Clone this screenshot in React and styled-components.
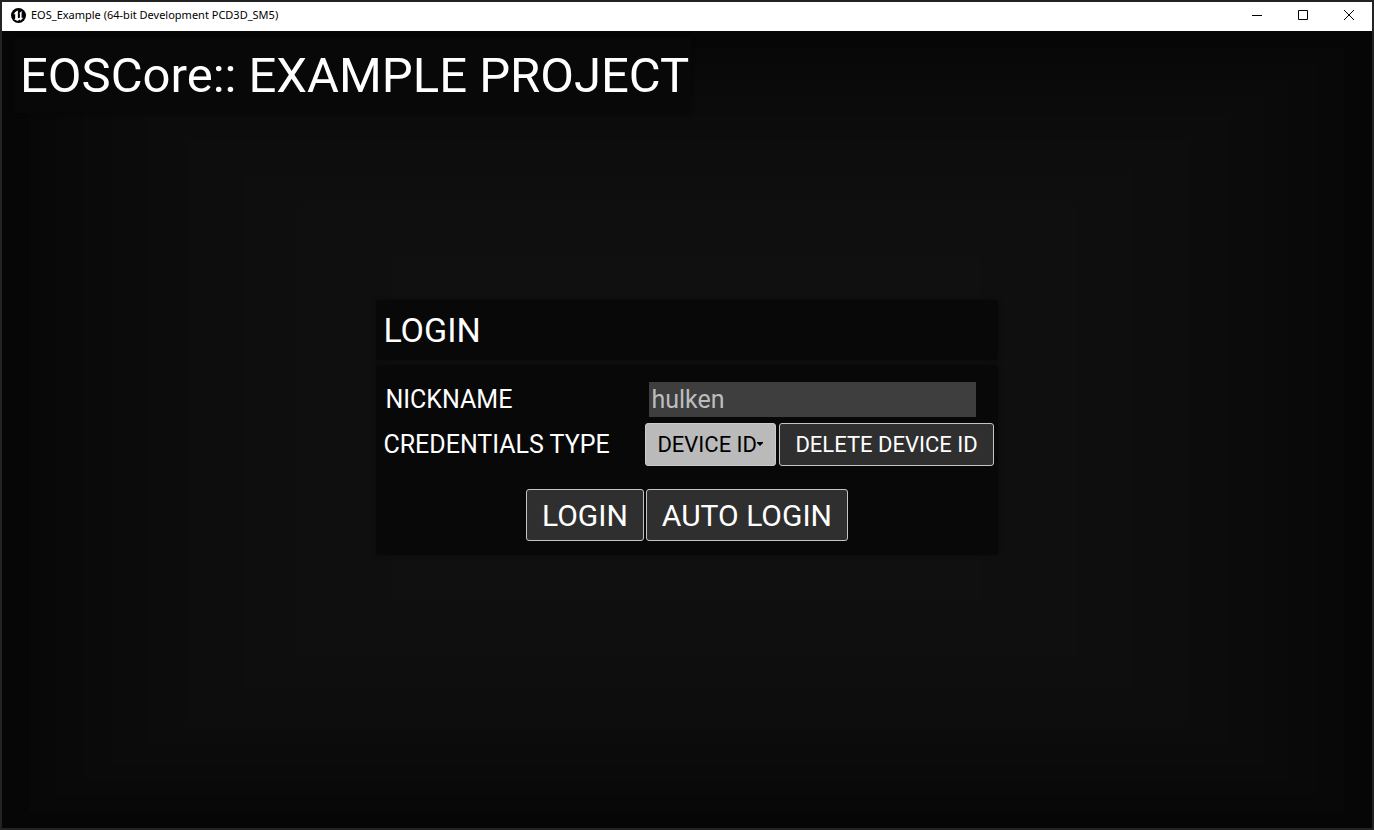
import React, { useState } from 'react';
import styled, { createGlobalStyle } from 'styled-components';

const GlobalStyle = createGlobalStyle`
  * {
    box-sizing: border-box;
  }

  body {
    margin: 0;
    background: #232323;
    font-family: Roboto, sans-serif;
  }
`;

const Window = styled.div`
  min-height: 100vh;
  padding: 2px;
  display: flex;
  flex-direction: column;
  background: #232323;
`;

const TitleBar = styled.header`
  height: 29px;
  padding: 0 0 3px 9px;
  display: flex;
  align-items: center;
  background: #fff;
  color: #000;
`;

const WindowTitle = styled.span`
  flex: 1;
  padding-left: 5px;
  font: 11px/16px 'Noto Sans', sans-serif;
`;

const WindowButton = styled.button`
  width: 46px;
  height: 26px;
  padding: 0;
  display: flex;
  align-items: center;
  justify-content: center;
  border: none;
  background: none;
  color: #000;
`;

// nested rectangles, one shade lighter with each step towards the centre
const shades = [
  { size: 43, level: 16 },
  { size: 57, level: 15 },
  { size: 65, level: 14 },
  { size: 73, level: 13 },
  { size: 79, level: 12 },
  { size: 84, level: 11 },
  { size: 88, level: 10 },
  { size: 92, level: 9 },
  { size: 96, level: 8 },
];

const fill = ({ level }) => `linear-gradient(rgb(${level}, ${level}, ${level}) 0 0)`;

const Stage = styled.main`
  flex: 1;
  padding: 7px 13px 11px;
  display: grid;
  grid-template-rows: 75px 1fr 75px;
  background-color: #060606;
  background-image: ${shades.map(fill).join(', ')};
  background-size: ${shades.map(({ size }) => `${size}% ${size}%`).join(', ')};
  background-position: center;
  background-repeat: no-repeat;
  color: #fff;
`;

const Banner = styled.h1`
  justify-self: start;
  margin: 0;
  padding: 0 2px 0 5px;
  background: #080808;
  box-shadow: 0 0 4px #060606;
  font-size: 49px;
  font-weight: 400;
  line-height: 75px;
`;

const LoginForm = styled.form`
  place-self: center;
  display: grid;
  gap: 5px;
`;

const Panel = styled.div`
  padding: ${(props) => props.$padding};
  border-radius: 4px;
  background: #080808;
  box-shadow: 0 0 4px #0a0a0a;
`;

const Heading = styled.h2`
  margin: 0;
  font-size: 34px;
  font-weight: 400;
  line-height: 60px;
`;

const Fields = styled.div`
  display: grid;
  grid-template-columns: 262px auto;
  row-gap: 6px;
  align-items: center;
`;

const Label = styled.label`
  padding-left: ${(props) => (props.$inset ? '2px' : '0')};
  font-size: 25px;
  line-height: 35px;
`;

const TextBox = styled.input`
  width: calc(100% - 22px);
  height: 35px;
  margin: 0 18px 0 4px;
  padding: 0 2px;
  border: none;
  outline: none;
  background: #3e3e3e;
  color: #bdbdbd;
  font: 25px/35px Roboto, sans-serif;
`;

const Controls = styled.div`
  display: flex;
  gap: 3px;
`;

const SelectBox = styled.div`
  display: flex;
  position: relative;
`;

const Select = styled.select`
  appearance: none;
  width: 131px;
  height: 43px;
  padding: 0 11px;
  border: 1px solid #cbcbcb;
  border-radius: 3px;
  outline: none;
  background: #bababa;
  color: #000;
  font: 22px/41px Roboto, sans-serif;
`;

const Caret = styled.svg`
  position: absolute;
  right: 13px;
  top: 19px;
  pointer-events: none;
`;

const Button = styled.button`
  height: ${(props) => (props.$large ? '52px' : '43px')};
  padding: 0 15px;
  border: 1px solid #c4c4c4;
  border-radius: 3px;
  background: #2f2f2f;
  color: #fff;
  font-family: inherit;
  font-size: ${(props) => (props.$large ? '30px' : '22px')};
`;

const Actions = styled.div`
  display: flex;
  justify-content: center;
  gap: 2px;
  padding: 23px 3px 14px 0;
`;

const UnrealLogo = () => (
  <svg width="15" height="15" viewBox="0 0 15 15" aria-hidden="true">
    <circle cx="7.5" cy="7.5" r="7.5" fill="#000" />
    <path
      d="M7.2 2.6C5 3.2 3.2 4.7 2.7 6.9c.6-.8 1.5-1.3 1.5-.4v3.7c0 .5-.4.8-.9.7.9 1.2 2.3 1.8 3.9 1.8l1.1-1.1 1.1.9c1.4-.8 2.3-1.8 2.8-3.2-.8.7-1.6 1-1.6.2V4.9c0-.6.4-1.1 1-1.6-.9.2-2.5.8-3.3 1.9.5 0 .6.2.6.7v3.7c-.4.5-.9.7-1.3.7-.4 0-.7-.2-.7-.7V4.4c0-.7 0-1.2.3-1.8z"
      fill="#fff"
    />
  </svg>
);

const App = () => {
  const [nickname, setNickname] = useState('hulken');

  return (
    <Window>
      <GlobalStyle />
      <TitleBar>
        <UnrealLogo />
        <WindowTitle>EOS_Example (64-bit Development PCD3D_SM5)</WindowTitle>
        <WindowButton type="button" aria-label="Minimize">
          <svg width="10" height="10"><path d="M0 5.5h10" stroke="currentColor" /></svg>
        </WindowButton>
        <WindowButton type="button" aria-label="Maximize">
          <svg width="10" height="10"><path d="M.5.5h9v9h-9z" fill="none" stroke="currentColor" /></svg>
        </WindowButton>
        <WindowButton type="button" aria-label="Close">
          <svg width="10" height="10"><path d="M0 0l10 10M10 0L0 10" stroke="currentColor" /></svg>
        </WindowButton>
      </TitleBar>
      <Stage>
        <Banner>EOSCore:: EXAMPLE PROJECT</Banner>
        <LoginForm onSubmit={(e) => e.preventDefault()}>
          <Panel $padding="0 7px">
            <Heading>LOGIN</Heading>
          </Panel>
          <Panel $padding="17px 4px 0 7px">
            <Fields>
              <Label htmlFor="nickname" $inset>NICKNAME</Label>
              <TextBox
                id="nickname"
                type="text"
                value={nickname}
                onChange={(e) => setNickname(e.target.value)}
              />
              <Label htmlFor="credentials">CREDENTIALS TYPE</Label>
              <Controls>
                <SelectBox>
                  <Select id="credentials">
                    <option>DEVICE ID</option>
                  </Select>
                  <Caret width="6" height="4" viewBox="0 0 6 4" aria-hidden="true">
                    <path d="M0 0h6v1L3 4 0 1z" fill="#000" />
                  </Caret>
                </SelectBox>
                <Button type="button">DELETE DEVICE ID</Button>
              </Controls>
            </Fields>
            <Actions>
              <Button type="submit" $large>LOGIN</Button>
              <Button type="button" $large>AUTO LOGIN</Button>
            </Actions>
          </Panel>
        </LoginForm>
      </Stage>
    </Window>
  );
};

export default App;
